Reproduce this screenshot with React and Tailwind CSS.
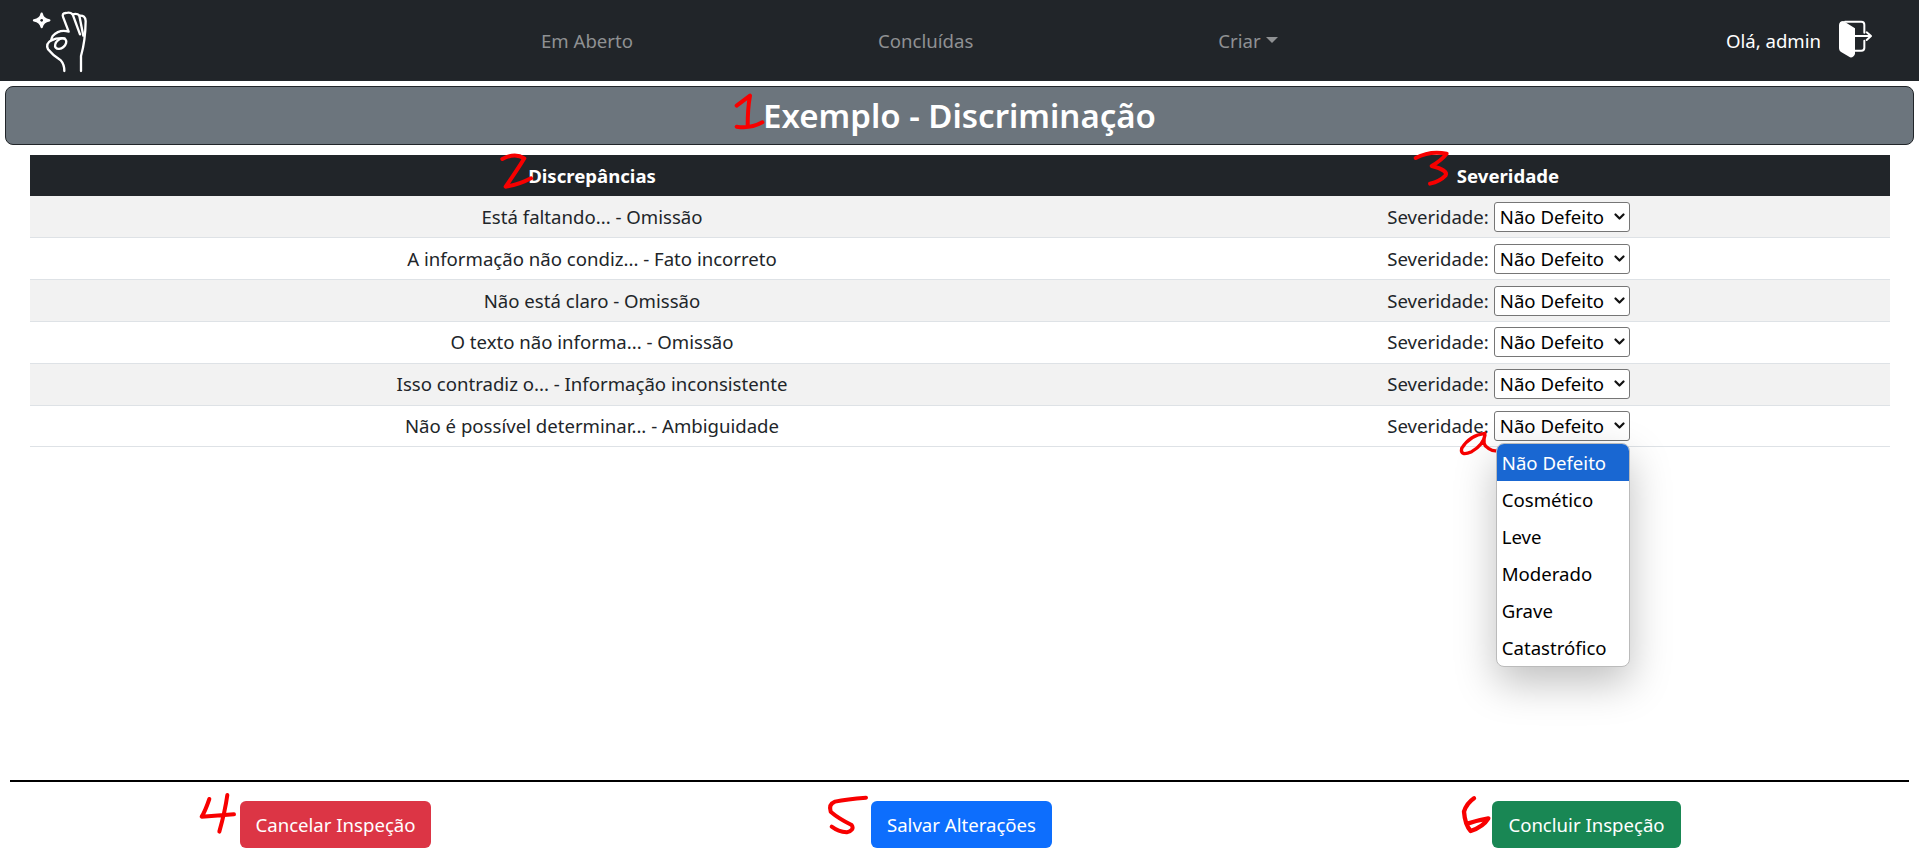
import React from "react";

const rows = [
  "Está faltando... - Omissão",
  "A informação não condiz... - Fato incorreto",
  "Não está claro - Omissão",
  "O texto não informa... - Omissão",
  "Isso contradiz o... - Informação inconsistente",
  "Não é possível determinar... - Ambiguidade",
];
const options = ["Cosmético", "Leve", "Moderado", "Grave", "Catastrófico"];

function Logo() {
  return (
    <svg width="90" height="80" viewBox="0 0 270 240" fill="none" stroke="white" strokeWidth="7" strokeLinecap="round" strokeLinejoin="round">
      <path d="M65 38 Q68 54 88 58 Q68 62 65 78 Q62 62 42 58 Q62 54 65 38Z" fill="white" />
      <circle cx="65" cy="58" r="4" fill="#212529" stroke="none" />
      <path d="M183 210 V165 Q196 120 197 60 Q196 42 178 44 Q172 36 158 40 Q150 32 138 36 Q124 36 130 50 L146 92 Q118 84 98 105 Q94 112 94 118 Q76 128 84 145 Q100 165 122 178 Q133 190 133 210" />
      <path d="M158 40 L180 100 M178 44 L190 104" />
      <ellipse cx="122" cy="128" rx="19" ry="13" transform="rotate(-40 122 128)" />
      <path d="M94 118 Q110 110 134 112" />
    </svg>
  );
}

function ExitIcon() {
  return (
    <svg width="99" height="70" viewBox="0 0 297 210" fill="none">
      <path d="M57 45 Q58 33 70 33 L105 55 V132 Q100 144 90 142 L62 125 Q57 122 57 115Z" fill="white" />
      <path d="M75 35 H124 Q133 35 133 44 V68 M133 92 V114 Q133 122 124 122 H105" stroke="white" strokeWidth="6" strokeLinecap="round" />
      <path d="M105 78 H150 M140 67 L153 78 L140 90" stroke="white" strokeWidth="6" strokeLinecap="round" strokeLinejoin="round" />
    </svg>
  );
}

function Chevron() {
  return (
    <svg width="11" height="8" viewBox="0 0 11 8" fill="none" stroke="#111" strokeWidth="2.2" strokeLinecap="round" strokeLinejoin="round">
      <path d="M1.5 1.5 L5.5 5.5 L9.5 1.5" />
    </svg>
  );
}

function Annotations() {
  const s = { fill: "none", stroke: "#f80000", strokeLinecap: "round", strokeLinejoin: "round" };
  return (
    <svg className="absolute left-0 top-0 pointer-events-none" width="1919" height="861">
      <g transform="translate(725 85) scale(.3333)" {...s} strokeWidth="12">
        <path d="M35 62 L75 32 Q68 70 68 125 M35 125 Q75 132 112 112" />
      </g>
      <g transform="translate(495 145) scale(.3333)" {...s} strokeWidth="12">
        <path d="M22 42 Q60 22 88 40 Q70 70 32 125 Q70 120 108 100" />
      </g>
      <g transform="translate(1405 142) scale(.3333)" {...s} strokeWidth="12">
        <path d="M32 48 Q75 25 125 35 Q110 55 80 72 Q130 85 122 100 Q105 118 75 125" />
      </g>
      <g transform="translate(190 785) scale(.3333)" {...s} strokeWidth="12">
        <path d="M58 42 Q45 80 35 95 L132 88 M112 30 Q105 80 88 140" />
      </g>
      <g transform="translate(820 785) scale(.3333)" {...s} strokeWidth="12">
        <path d="M138 38 Q80 42 45 50 Q25 58 32 80 Q55 100 95 120 Q105 135 80 142 Q55 140 35 125" />
      </g>
      <g transform="translate(1450 785) scale(.3333)" {...s} strokeWidth="13">
        <path d="M72 40 Q50 55 42 80 Q45 120 62 138 Q100 125 115 100 Q85 105 55 115" />
      </g>
      <g transform="translate(1360 400) scale(.3333)" {...s} strokeWidth="10">
        <path d="M375 100 Q330 105 305 145 Q300 170 335 155 Q370 135 375 105 Q365 135 385 145 Q400 155 412 152" />
      </g>
    </svg>
  );
}

function SelectBox() {
  return (
    <div className="w-[136px] h-[30px] border border-[#767676] rounded-[3px] bg-white flex items-center justify-between pl-[5px] pr-[4px] text-black">
      <span>Não Defeito</span>
      <Chevron />
    </div>
  );
}

export default function App() {
  return (
    <div className="relative h-[861px] w-[1919px] overflow-hidden bg-white text-[#212529] font-['Noto_Sans',sans-serif] text-[18.6px] flex flex-col">
      <nav className="h-[81px] shrink-0 bg-[#212529] flex items-center">
        <div className="w-[90px] ml-[20px]"><Logo /></div>
        <div className="flex items-center gap-[245px] ml-[431px] text-[#8f9193]">
          <span>Em Aberto</span>
          <span>Concluídas</span>
          <span className="flex items-center gap-[5px]">
            Criar
            <span className="w-0 h-0 border-x-[6px] border-x-transparent border-t-[6px] border-t-[#8f9193]" />
          </span>
        </div>
        <div className="ml-auto flex items-center text-white">
          <span>Olá, admin</span>
          <div className="w-[99px] -ml-[1px] translate-y-[4px]"><ExitIcon /></div>
        </div>
      </nav>

      <div className="mt-[5px] mx-[5px] h-[59px] shrink-0 bg-[#6c757d] border border-[#212529] rounded-lg flex items-center justify-center text-white text-[33px] font-semibold">
        Exemplo - Discriminação
      </div>

      <table className="mt-[10px] ml-[30px] w-[1860px] table-fixed border-collapse">
        <colgroup>
          <col className="w-[1124px]" />
          <col />
        </colgroup>
        <thead>
          <tr className="bg-[#212529] text-white font-bold h-[41px]">
            <th className="font-bold text-center">Discrepâncias</th>
            <th className="font-bold text-center pr-[28px]">Severidade</th>
          </tr>
        </thead>
        <tbody>
          {rows.map((r, i) => (
            <tr key={r} className={`h-[41.83px] border-b border-[#dee2e6] ${i % 2 === 0 ? "bg-[#f2f2f2]" : "bg-white"}`}>
              <td className="text-center">{r}</td>
              <td className="pr-[27px]">
                <div className="flex items-center justify-center gap-[5px]">
                  <span>Severidade:</span>
                  <div className="relative">
                    <SelectBox />
                    {i === 5 && (
                      <div className="absolute left-[2px] top-[32px] z-10 w-[134px] rounded-[8px] overflow-hidden bg-white border border-[#bbb] shadow-[0_16px_40px_rgba(0,0,0,0.25)]">
                        <div className="h-[37px] flex items-center pl-[5px] bg-[#1967d2] text-white">Não Defeito</div>
                        {options.map((o) => (
                          <div key={o} className="h-[37px] flex items-center pl-[5px] text-black">{o}</div>
                        ))}
                      </div>
                    )}
                  </div>
                </div>
              </td>
            </tr>
          ))}
        </tbody>
      </table>

      <div className="mt-auto mx-[10px] border-t-2 border-black h-[81px] shrink-0 flex justify-center gap-[440px] pt-[19px] pl-[2px] text-white">
        <button className="w-[191px] h-[47px] rounded-md bg-[#dc3545]">Cancelar Inspeção</button>
        <button className="w-[181px] h-[47px] rounded-md bg-[#0d6efd]">Salvar Alterações</button>
        <button className="w-[189px] h-[47px] rounded-md bg-[#198754]">Concluir Inspeção</button>
      </div>

      <Annotations />
    </div>
  );
}
